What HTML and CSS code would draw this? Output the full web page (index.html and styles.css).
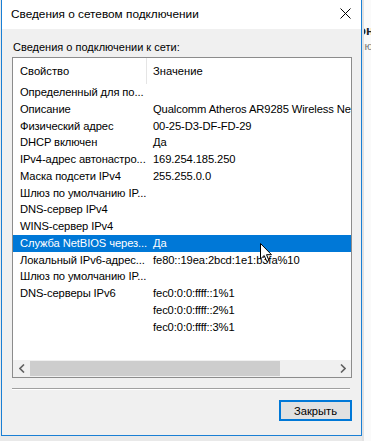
FILE: index.html
```html
<!DOCTYPE html>
<html lang="ru">
<head>
  <meta charset="UTF-8">
  <meta name="viewport" content="width=device-width, initial-scale=1">
  <title>Сведения о сетевом подключении</title>
  <link rel="stylesheet" href="styles.css">
</head>
<body>
  <div class="window">
    <div class="titlebar">
      <span class="title">Сведения о сетевом подключении</span>
      <svg class="close" width="11" height="11" viewBox="0 0 11 11">
        <path d="M0.5 0.5 L10.5 10.5 M10.5 0.5 L0.5 10.5" stroke="#000" stroke-width="1"/>
      </svg>
    </div>

    <div class="content">
      <div class="caption">Сведения о подключении к сети:</div>

      <div class="listbox">
        <div class="list-header">
          <div class="col1">Свойство</div>
          <div class="col2">Значение</div>
        </div>
        <div class="rows">
          <div class="row"><div class="col1">Определенный для по...</div><div class="col2"></div></div>
          <div class="row"><div class="col1">Описание</div><div class="col2">Qualcomm Atheros AR9285 Wireless Network Adapter</div></div>
          <div class="row"><div class="col1">Физический адрес</div><div class="col2">00-25-D3-DF-FD-29</div></div>
          <div class="row"><div class="col1">DHCP включен</div><div class="col2">Да</div></div>
          <div class="row"><div class="col1">IPv4-адрес автонастро...</div><div class="col2">169.254.185.250</div></div>
          <div class="row"><div class="col1">Маска подсети IPv4</div><div class="col2">255.255.0.0</div></div>
          <div class="row"><div class="col1">Шлюз по умолчанию IP...</div><div class="col2"></div></div>
          <div class="row"><div class="col1">DNS-сервер IPv4</div><div class="col2"></div></div>
          <div class="row"><div class="col1">WINS-сервер IPv4</div><div class="col2"></div></div>
          <div class="row selected"><div class="col1">Служба NetBIOS через...</div><div class="col2">Да</div></div>
          <div class="row"><div class="col1">Локальный IPv6-адрес...</div><div class="col2">fe80::19ea:2bcd:1e1:b3fa%10</div></div>
          <div class="row"><div class="col1">Шлюз по умолчанию IP...</div><div class="col2"></div></div>
          <div class="row"><div class="col1">DNS-серверы IPv6</div><div class="col2">fec0:0:0:ffff::1%1</div></div>
          <div class="row"><div class="col1"></div><div class="col2">fec0:0:0:ffff::2%1</div></div>
          <div class="row"><div class="col1"></div><div class="col2">fec0:0:0:ffff::3%1</div></div>
        </div>
        <div class="hscroll">
          <span class="arrow">
            <svg width="6" height="9" viewBox="0 0 6 9"><path d="M5 0.5 L1 4.5 L5 8.5" fill="none" stroke="#606060" stroke-width="1.6"/></svg>
          </span>
          <div class="track"><div class="thumb"></div></div>
          <span class="arrow">
            <svg width="6" height="9" viewBox="0 0 6 9"><path d="M1 0.5 L5 4.5 L1 8.5" fill="none" stroke="#606060" stroke-width="1.6"/></svg>
          </span>
        </div>
      </div>

      <div class="separator"></div>

      <div class="buttons">
        <button class="btn">Закрыть</button>
      </div>
    </div>

    <svg class="cursor" width="13" height="20" viewBox="0 0 13 20">
      <path d="M0.5 0.5 L0.5 16 L4.2 12.5 L6.8 18.5 L9 17.5 L6.5 11.7 L11.5 11.7 Z" fill="#fff" stroke="#000" stroke-width="1"/>
    </svg>
  </div>

  <div class="behind">
    <div class="behind-title">он</div>
    <div class="behind-text">лю</div>
  </div>
</body>
</html>
```

FILE: styles.css
```css
* {
  box-sizing: border-box;
}
html, body {
  height: 441px;
  overflow: hidden;
}
body {
  margin: 0;
  background: #e9e9e9;
  font-family: 'Liberation Sans', Arial, sans-serif;
  font-size: 11.2px;
  color: #000;
  display: flex;
  align-items: flex-start;
}
.window {
  position: relative;
  margin-left: 1px;
  width: 361px;
  border: 1px solid #1a7fd4;
  border-top: none;
  background: #f0f0f0;
  flex-shrink: 0;
}
.titlebar {
  height: 29px;
  background: #fff;
  display: flex;
  align-items: center;
  justify-content: space-between;
  padding: 0 10px 0 9px;
}
.title {
  font-size: 11.8px;
  padding-bottom: 2px;
}
.close {
  margin-top: -2px;
}
.content {
  padding: 10px 9px 14px 10px;
}
.caption {
  font-size: 11px;
  line-height: 16px;
  margin-bottom: 2px;
  padding-left: 1px;
}
.listbox {
  background: #fff;
  border: 1px solid #8c8c8c;
  height: 321px;
  display: flex;
  flex-direction: column;
  overflow: hidden;
}
.list-header {
  display: flex;
  height: 26px;
  align-items: center;
  flex-shrink: 0;
}
.list-header .col1 {
  border-right: 1px solid #e5e5e5;
  height: 26px;
  line-height: 26px;
}
.rows {
  flex: 1;
}
.row {
  display: flex;
  height: 16.75px;
  line-height: 16.75px;
  letter-spacing: -0.1px;
}
.col1 {
  width: 134px;
  padding-left: 7px;
  white-space: nowrap;
  overflow: hidden;
  flex-shrink: 0;
}
.col2 {
  padding-left: 6px;
  white-space: nowrap;
  overflow: hidden;
  flex: 1;
}
.row.selected {
  background: #0078d7;
  color: #fff;
}
.hscroll {
  height: 17px;
  background: #f0f0f0;
  display: flex;
  align-items: center;
  flex-shrink: 0;
}
.arrow {
  width: 17px;
  height: 17px;
  display: flex;
  align-items: center;
  justify-content: center;
}
.track {
  flex: 1;
  height: 15px;
}
.thumb {
  width: 250px;
  height: 15px;
  background: #cdcdcd;
}
.separator {
  margin: 10px 2px 10px 0;
  border-top: 1px solid #a0a0a0;
  border-bottom: 1px solid #fff;
}
.buttons {
  display: flex;
  justify-content: flex-end;
}
.btn {
  width: 73px;
  height: 21px;
  border: 2px solid #0078d7;
  background: #e1e1e1;
  font-family: 'Liberation Sans', Arial, sans-serif;
  font-size: 11.2px;
  color: #000;
  padding: 0;
}
.cursor {
  position: absolute;
  left: 258px;
  top: 243px;
}
.behind {
  flex: 1;
  background: #fafafa;
  height: 441px;
  overflow: hidden;
  white-space: nowrap;
  padding-top: 23px;
  border-left: 2px solid #e2e2e2;
}
.behind-title {
  font-weight: bold;
  font-size: 13px;
  margin-left: -6px;
  color: #222;
}
.behind-text {
  margin-left: -6px;
  margin-top: 2px;
  color: #777;
}
```
